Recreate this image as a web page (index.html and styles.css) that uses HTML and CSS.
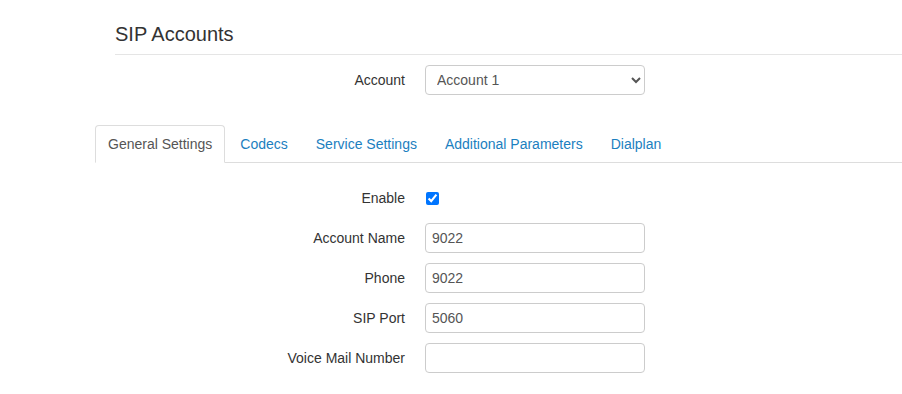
FILE: index.html
```html
<!DOCTYPE html>
<html lang="en">
<head>
  <meta charset="UTF-8">
  <meta name="viewport" content="width=device-width, initial-scale=1.0">
  <title>SIP Accounts</title>
  <link rel="stylesheet" href="styles.css">
</head>
<body>
  <div class="page">
    <div class="page-header">
      <h3>SIP Accounts</h3>
    </div>
    <div class="form-row account-row">
      <label for="account">Account</label>
      <select id="account" class="form-control">
        <option>Account 1</option>
        <option>Account 2</option>
        <option>Account 3</option>
      </select>
    </div>
    <ul class="nav-tabs">
      <li class="active"><a href="#">General Settings</a></li>
      <li><a href="#">Codecs</a></li>
      <li><a href="#">Service Settings</a></li>
      <li><a href="#">Additional Parameters</a></li>
      <li><a href="#">Dialplan</a></li>
    </ul>
    <div class="tab-content">
      <div class="form-row">
        <label for="enable">Enable</label>
        <div class="check-wrap"><input type="checkbox" id="enable" checked></div>
      </div>
      <div class="form-row">
        <label for="account-name">Account Name</label>
        <input type="text" id="account-name" class="form-control" value="9022">
      </div>
      <div class="form-row">
        <label for="phone">Phone</label>
        <input type="text" id="phone" class="form-control" value="9022">
      </div>
      <div class="form-row">
        <label for="sip-port">SIP Port</label>
        <input type="text" id="sip-port" class="form-control" value="5060">
      </div>
      <div class="form-row">
        <label for="voicemail">Voice Mail Number</label>
        <input type="text" id="voicemail" class="form-control" value="">
      </div>
    </div>
  </div>
</body>
</html>
```

FILE: styles.css
```css
body {
  font-family: "Liberation Sans", Arial, sans-serif;
  font-size: 14px;
  line-height: 20px;
  color: #333;
  margin: 0;
  padding: 0;
  background-color: #fff;
}
.page {
  padding-left: 95px;
}
.page-header {
  margin: 23px 0 0 20px;
  padding-bottom: 9px;
  border-bottom: 1px solid #e5e5e5;
}
h3 {
  font-size: 20px;
  font-weight: normal;
  line-height: 22px;
  margin: 0;
}
.form-row {
  display: flex;
  align-items: center;
  height: 30px;
  margin-bottom: 10px;
}
.form-row label {
  width: 310px;
  text-align: right;
  margin-right: 20px;
}
.account-row {
  margin-top: 10px;
  margin-bottom: 30px;
}
.form-control {
  box-sizing: border-box;
  width: 220px;
  height: 30px;
  padding: 4px 6px;
  font-family: inherit;
  font-size: 14px;
  color: #555;
  background-color: #fff;
  border: 1px solid #ccc;
  border-radius: 4px;
}
select.form-control {
  padding: 4px 6px 4px 7px;
}
.check-wrap {
  display: flex;
  align-items: center;
}
.check-wrap input {
  margin: 0 0 0 1px;
  width: 13px;
  height: 13px;
}
.nav-tabs {
  display: flex;
  list-style: none;
  margin: 0;
  padding: 0;
  border-bottom: 1px solid #ddd;
}
.nav-tabs li {
  margin-right: 2px;
  margin-bottom: -1px;
}
.nav-tabs a {
  display: block;
  padding: 8px 12px;
  line-height: 20px;
  color: #1b80c0;
  text-decoration: none;
  border: 1px solid transparent;
  border-radius: 4px 4px 0 0;
}
.nav-tabs a:hover {
  background-color: #eee;
  border-color: #eee #eee #ddd;
}
.nav-tabs .active a {
  color: #555;
  background-color: #fff;
  border-color: #ddd #ddd transparent;
}
.tab-content {
  padding-top: 20px;
}
```
